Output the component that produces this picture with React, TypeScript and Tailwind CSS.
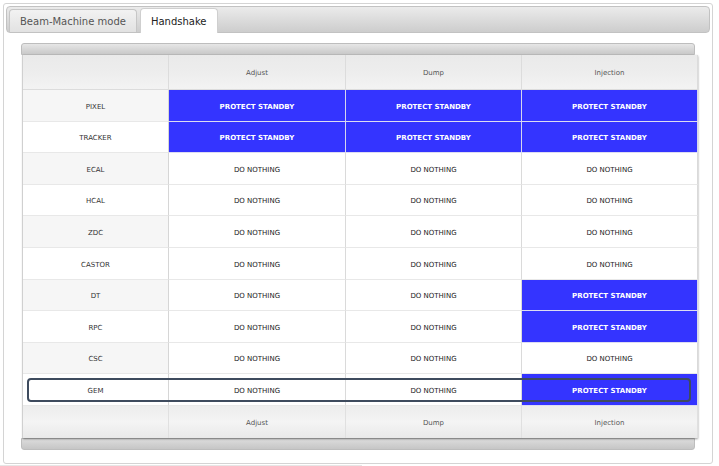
import React from "react";

type V = "P" | "N";
const rows: [string, V, V, V][] = [
  ["PIXEL", "P", "P", "P"],
  ["TRACKER", "P", "P", "P"],
  ["ECAL", "N", "N", "N"],
  ["HCAL", "N", "N", "N"],
  ["ZDC", "N", "N", "N"],
  ["CASTOR", "N", "N", "N"],
  ["DT", "N", "N", "P"],
  ["RPC", "N", "N", "P"],
  ["CSC", "N", "N", "N"],
  ["GEM", "N", "N", "P"],
];

function Cell({ v }: { v: V }) {
  if (v === "P")
    return (
      <div className="h-[31.6px] pt-[3px] flex items-center justify-center border-r border-b border-r-[#d6d6ee] border-b-[#dcdcf2] bg-[#3434ff] text-white font-bold text-[7px]">
        PROTECT STANDBY
      </div>
    );
  return (
    <div className="h-[31.6px] pt-[3px] flex items-center justify-center border-r border-b border-r-[#dadada] border-b-[#e8e8e8] bg-white text-[#222] text-[7px]">
      DO NOTHING
    </div>
  );
}

export default function App() {
  const head =
    "h-[35px] pt-[3px] flex items-center justify-center border-r border-b border-[#dcdcdc] text-[#555] text-[7px] bg-gradient-to-b from-[#eaeaea] via-[#ededed] to-[#f3f3f3]";
  const foot =
    "h-[32px] pt-[3px] flex items-center justify-center border-r border-[#e0e0e0] text-[#555] text-[7px] bg-gradient-to-b from-[#ededed] via-[#f4f4f4] to-[#e9e9e9]";
  return (
    <div className="w-[719px] h-[466px] bg-white overflow-hidden font-['DejaVu_Sans',sans-serif]">
      <div className="pt-[3px] pl-[3px]">
        <div className="w-[710px] h-[461px] border border-[#d4d4d4] rounded-[3px] p-[2px]">
          {/* tab bar */}
          <div className="h-[27px] border border-[#c2c2c2] rounded-[4px] bg-gradient-to-b from-[#ebebeb] to-[#cdcdcd] flex items-end pl-[2px] gap-[3px]">
            <div className="h-[23px] px-[10px] pt-[1px] flex items-center border border-b-0 border-[#c6c6c6] rounded-t-[4px] bg-gradient-to-b from-[#f2f2f2] to-[#e2e2e2] text-[10px] text-[#555] whitespace-nowrap">
              Beam-Machine mode
            </div>
            <div className="h-[25px] mb-[-1px] px-[10px] flex items-center border border-b-0 border-[#cfcfcf] rounded-t-[4px] bg-white text-[10px] text-[#222] whitespace-nowrap">
              Handshake
            </div>
          </div>
          {/* content */}
          <div className="mt-[10px] ml-[15px] w-[674px]">
            <div className="h-[12px] border border-[#bdbdbd] rounded-t-[3px] bg-gradient-to-b from-[#e6e6e6] to-[#c9c9c9]"></div>
            <div className="relative ml-[1px] w-[675px] border-l border-[#d0d0d0] bg-white shadow-[1px_1px_2px_rgba(0,0,0,0.4)]">
              <div className="grid grid-cols-[146px_177px_176px_176px]">
                <div className={head}></div>
                <div className={head}>Adjust</div>
                <div className={head}>Dump</div>
                <div className={head}>Injection</div>
                {rows.map(([name, a, d, i], idx) => (
                  <div className="contents" key={name}>
                    <div
                      className={
                        "h-[31.6px] pt-[3px] flex items-center justify-center border-r border-b border-r-[#d6d6d6] border-b-[#e8e8e8] text-[#333] text-[7px] " +
                        (idx % 2 === 0 ? "bg-[#f6f6f6]" : "bg-white")
                      }
                    >
                      {name}
                    </div>
                    <Cell v={a} />
                    <Cell v={d} />
                    <Cell v={i} />
                  </div>
                ))}
                <div className={foot}></div>
                <div className={foot}>Adjust</div>
                <div className={foot}>Dump</div>
                <div className={foot}>Injection</div>
              </div>
              <div className="absolute left-[4px] top-[323px] w-[664px] h-[24px] border-2 border-[#3e4b5e] rounded-[4px] pointer-events-none"></div>
            </div>
            <div className="h-[12px] border border-[#bdbdbd] rounded-b-[3px] bg-gradient-to-b from-[#dcdcdc] to-[#c6c6c6]"></div>
          </div>
        </div>
        <div className="ml-[-3px] mt-[1px] w-[362px] h-[1px] bg-[#e6e6e6]"></div>
      </div>
    </div>
  );
}
